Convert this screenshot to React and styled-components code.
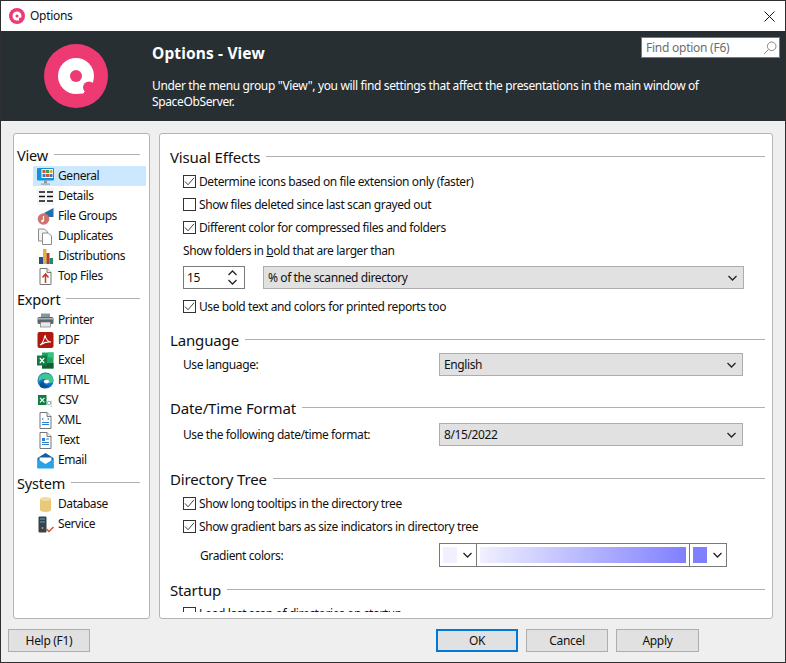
import React from 'react';
import styled, { createGlobalStyle } from 'styled-components';

const Global = createGlobalStyle`
  html, body { margin: 0; padding: 0; background: #efefef; }
  body { font-family: "Noto Sans", "Open Sans", sans-serif; font-size: 12px; color: #111; }
`;

const Window = styled.div`
  width: 786px;
  height: 663px;
  box-sizing: border-box;
  border: 1px solid #2f2f2f;
  display: flex;
  flex-direction: column;
  background: #efefef;
  overflow: hidden;
`;

const TitleBar = styled.div`
  height: 30px;
  flex: none;
  background: #fff;
  display: flex;
  align-items: center;
  padding: 0 10px 0 8px;
  gap: 5px;
  letter-spacing: -0.3px;
`;

const TitleText = styled.span`
  flex: 1;
  margin-top: -1px;
`;

const Header = styled.div`
  height: 90px;
  flex: none;
  background: #272f33;
  display: flex;
  color: #fff;
`;

const LogoWrap = styled.div`
  width: 151px;
  flex: none;
  padding: 13px 0 0 43px;
  box-sizing: border-box;
`;

const HeaderCopy = styled.div`
  flex: 1;
  display: flex;
  flex-direction: column;
  padding: 6px 5px 0 0;
`;

const HeaderTop = styled.div`
  display: flex;
  justify-content: space-between;
  height: 40px;
`;

const HeaderTitle = styled.div`
  font-size: 15.5px;
  font-weight: 700;
  letter-spacing: 0.14px;
  line-height: 20px;
  margin-top: 6px;
`;

const SearchBox = styled.div`
  width: 139px;
  height: 21px;
  box-sizing: border-box;
  background: #fff;
  border: 1px solid #7a7a7a;
  color: #6d6d6d;
  display: flex;
  align-items: center;
  justify-content: space-between;
  padding: 0 2px 0 4px;
  letter-spacing: -0.25px;
`;

const HeaderDesc = styled.div`
  width: 570px;
  line-height: 15.5px;
  letter-spacing: -0.36px;
  margin-top: 1px;
`;

const Body = styled.div`
  flex: none;
  display: flex;
  gap: 9px;
  padding: 12px 12px 0 12px;
`;

const Panel = styled.div`
  background: #fff;
  border: 1px solid #b4b4b4;
  border-radius: 3px;
  box-sizing: border-box;
  height: 486px;
  overflow: hidden;
`;

const Sidebar = styled(Panel)`
  width: 137px;
  flex: none;
  padding: 11px 3px 0 3px;
`;

const GroupHead = styled.div`
  height: 21px;
  box-sizing: border-box;
  padding-bottom: 2px;
  display: flex;
  align-items: center;
  gap: 6px;
  font-size: 14.5px;
  letter-spacing: -0.2px;
  padding-right: 6px;
  margin-top: ${p => (p.$first ? 0 : 3)}px;
  &::after {
    content: '';
    flex: 1;
    height: 1px;
    background: #b0b0b0;
  }
`;

const NavItem = styled.div`
  height: 20px;
  margin-left: 16px;
  display: flex;
  align-items: center;
  gap: 4px;
  padding-left: 4px;
  background: ${p => (p.$active ? '#cce8ff' : 'transparent')};
  letter-spacing: -0.42px;
`;

const NavLabel = styled.span`
  margin-top: -2px;
`;

const NavIcon = styled.svg`
  width: 17px;
  height: 17px;
  flex: none;
`;

const Main = styled(Panel)`
  flex: 1;
  padding: 13px 7px 0 10px;
`;

const ScrollArea = styled.div`
  height: 465px;
  overflow: hidden;
`;

const SectionHead = styled.div`
  height: 20px;
  display: flex;
  align-items: center;
  gap: 6px;
  font-size: 15px;
  letter-spacing: -0.15px;
  margin-top: ${p => p.$gap || 0}px;
  margin-bottom: ${p => p.$after || 0}px;
  &::after {
    content: '';
    flex: 1;
    height: 1px;
    background: #b0b0b0;
    margin-top: -2px;
  }
`;

const Row = styled.div`
  height: ${p => p.$h || 23}px;
  display: flex;
  align-items: center;
  padding-left: 13px;
  letter-spacing: -0.4px;
  margin-top: ${p => p.$top || 0}px;
`;

const Box = styled.span`
  width: 13px;
  height: 13px;
  box-sizing: border-box;
  border: 1px solid #333;
  background: #fff;
  margin-right: 3px;
  flex: none;
  display: flex;
  align-items: center;
  justify-content: center;
`;

const Spin = styled.div`
  width: 62px;
  height: 23px;
  box-sizing: border-box;
  border: 1px solid #7a7a7a;
  background: #fff;
  display: flex;
  align-items: center;
  justify-content: space-between;
  padding: 0 7px 0 3px;
  margin-right: 18px;
`;

const SpinArrows = styled.div`
  display: flex;
  flex-direction: column;
  gap: 3px;
`;

const Select = styled.div`
  width: ${p => p.$w}px;
  height: 23px;
  box-sizing: border-box;
  border: 1px solid #adadad;
  background: #e1e1e1;
  display: flex;
  align-items: center;
  justify-content: space-between;
  padding: 0 6px 0 4px;
`;

const RowLabel = styled.span`
  width: 256px;
  flex: none;
  box-sizing: border-box;
  padding-left: ${p => p.$indent || 0}px;
`;

const GradientCtl = styled.div`
  width: 288px;
  height: 24px;
  box-sizing: border-box;
  border: 1px solid #7a7a7a;
  background: #fff;
  display: flex;
`;

const PickerCell = styled.div`
  width: 36px;
  flex: none;
  display: flex;
  align-items: center;
  justify-content: space-between;
  padding: 0 4px 0 3px;
  box-sizing: border-box;
`;

const Swatch = styled.div`
  width: 14px;
  height: 16px;
  background: ${p => p.$c};
`;

const GradientCell = styled.div`
  flex: 1;
  border-left: 1px solid #7a7a7a;
  border-right: 1px solid #7a7a7a;
  padding: 3px;
  display: flex;
`;

const GradientBar = styled.div`
  flex: 1;
  background: linear-gradient(to right, #f0f0ff, #8080ff);
`;

const Footer = styled.div`
  flex: 1;
  display: flex;
  align-items: flex-start;
  padding: 10px 0 0 7px;
`;

const Button = styled.div`
  width: ${p => p.$w || 82}px;
  height: 23px;
  box-sizing: border-box;
  border: ${p => (p.$primary ? '2px solid #0078d7' : '1px solid #adadad')};
  background: #e1e1e1;
  display: flex;
  align-items: center;
  justify-content: center;
  margin-left: ${p => p.$left || 0}px;
  letter-spacing: -0.3px;
`;

const Logo = ({ size }) => (
  <svg width={size} height={size} viewBox="0 0 64 64">
    <circle cx="32" cy="32" r="32" fill="#ee3a72" />
    <circle cx="32" cy="32" r="18" fill="#fff" />
    <circle cx="32" cy="32" r="6" fill="#ee3a72" />
    <circle cx="45" cy="43.5" r="6" fill="#ee3a72" />
    <circle cx="38" cy="47.5" r="2.2" fill="#fff" />
  </svg>
);

const Chevron = ({ up }) => (
  <svg width="9" height="6" viewBox="0 0 9 6">
    <path d={up ? 'M0.5 5L4.5 1L8.5 5' : 'M0.5 1L4.5 5L8.5 1'} fill="none" stroke="#222" strokeWidth="1.3" />
  </svg>
);

const Check = () => (
  <svg width="11" height="11" viewBox="0 0 11 11">
    <path d="M1 5.5L4 8.8L10 1.8" fill="none" stroke="#444" strokeWidth="1" />
  </svg>
);

const CheckRow = ({ checked, children, top }) => (
  <Row $top={top}>
    <Box>{checked && <Check />}</Box>
    <span>{children}</span>
  </Row>
);

const Doc = ({ children, stroke = '#777' }) => (
  <>
    <path d="M3 .5h7l4 4v12H3z" fill="#fff" stroke={stroke} />
    <path d="M10 .5v4h4" fill="#eee" stroke={stroke} />
    {children}
  </>
);

const icons = {
  General: (
    <>
      <rect x="0" y="0" width="17" height="12.5" fill="#1593d6" rx="1" />
      <rect x="4.5" y="1" width="11.5" height="9" fill="#fff" />
      <rect x="5.5" y="2" width="3" height="3" fill="#e24c3a" />
      <rect x="9" y="2" width="3" height="3" fill="#3fa04a" />
      <rect x="12.5" y="2" width="3" height="3" fill="#e8a52a" />
      <rect x="5.5" y="6" width="3" height="3" fill="#2d7fd3" />
      <rect x="9" y="6" width="3" height="3" fill="#d8562e" />
      <rect x="12.5" y="6" width="3" height="3" fill="#3b6fc4" />
      <rect x="7" y="12.5" width="3" height="3" fill="#8a97a0" />
      <rect x="4" y="15.5" width="9" height="1.2" fill="#9aa5ad" />
    </>
  ),
  Details: (
    <>
      <rect x="0" y="0" width="17" height="17" fill="#f6f6f6" />
      <path d="M2 4h6M2 8.5h6M2 13h6M10 4h6M10 8.5h6M10 13h6" stroke="#111" strokeWidth="1.3" fill="none" />
    </>
  ),
  'File Groups': (
    <>
      <path d="M7 5L16.5 0v9H10z" fill="#1f6fb5" />
      <circle cx="6.5" cy="11" r="5.8" fill="#d0736e" />
      <path d="M6.5 8v5" stroke="#fff" strokeWidth="1.2" />
      <circle cx="5.4" cy="13" r="1.2" fill="#fff" />
    </>
  ),
  Duplicates: (
    <>
      <path d="M1.5 1h6l3 3v9h-9z" fill="#f3f3f3" stroke="#8c8c8c" />
      <path d="M5.5 5h6l3 3v8.5h-9z" fill="#fff" stroke="#8c8c8c" />
    </>
  ),
  Distributions: (
    <>
      <rect x="2" y="9" width="4" height="7" fill="#2b4c8c" />
      <rect x="6" y="1" width="3.5" height="15" fill="#e0b23a" />
      <rect x="9.5" y="5" width="3" height="11" fill="#b23a2e" />
      <rect x="12.5" y="10" width="3.5" height="6" fill="#1f8a70" />
    </>
  ),
  'Top Files': (
    <Doc>
      <path d="M8.5 15V7M5.5 9.5l3-3.5 3 3.5" fill="none" stroke="#c8392b" strokeWidth="1.5" />
    </Doc>
  ),
  Printer: (
    <>
      <rect x="4" y="1.5" width="9" height="4" fill="#8a9499" />
      <rect x="6" y="2.5" width="5" height="1" fill="#35c48d" />
      <rect x=".5" y="5" width="16" height="7" rx="1.5" fill="#5d686e" />
      <rect x="1" y="6" width="15" height="1.5" fill="#a9b2b6" />
      <rect x="3.5" y="10" width="10" height="5" fill="#e8e8e8" stroke="#6a6a6a" strokeWidth=".6" />
    </>
  ),
  PDF: (
    <>
      <rect x=".5" y="0" width="16" height="16" rx="2" fill="#b0170f" />
      <path d="M3 13c2-1 4-5 5-10 .6 4 2.5 6.5 6 7-3-.4-7 .4-11 3z" fill="none" stroke="#fff" strokeWidth="1.1" />
    </>
  ),
  Excel: (
    <>
      <rect x="5" y="0.5" width="11.5" height="16" fill="#21a366" />
      <rect x="11" y="0.5" width="5.5" height="5" fill="#33c481" />
      <rect x="5" y="11" width="11.5" height="5.5" fill="#185c37" />
      <rect x="0" y="3.5" width="10" height="10" fill="#107c41" />
      <path d="M2.8 6l4.4 5M7.2 6l-4.4 5" stroke="#fff" strokeWidth="1.3" fill="none" />
    </>
  ),
  HTML: (
    <>
      <circle cx="8.5" cy="8.5" r="8" fill="#1273c4" />
      <path d="M1.5 6C4.5 0 14 0 16.5 7c.5 3-2 5-5 4 1-2-.5-4-3-4C5.5 7 3.5 7.5 1.5 10z" fill="#3ec78e" />
      <path d="M6 9.5c0 3 3.5 5 7 3.5-2 3-6 4-9 2.5C2 13.5 3 9.5 6 9.5z" fill="#0f4f98" />
      <ellipse cx="9.5" cy="9.5" rx="2.6" ry="2" fill="#fff" />
    </>
  ),
  CSV: (
    <>
      <rect x="1" y="3" width="8.5" height="10" fill="#107c41" />
      <path d="M3 5.8l4.4 4.6M7.4 5.8L3 10.4" stroke="#fff" strokeWidth="1.2" fill="none" />
      <circle cx="12" cy="11" r="1.8" fill="none" stroke="#86b8a2" />
      <path d="M14 9v3.5M14.8 13.5l-.8 1.5" stroke="#86b8a2" fill="none" />
    </>
  ),
  XML: (
    <Doc>
      <path d="M6.5 6L5 7l1.5 1M10.5 6L12 7l-1.5 1" fill="none" stroke="#2f7fd1" strokeWidth=".8" />
      <path d="M5 10.5h7M5 12.5h7" stroke="#2f7fd1" strokeWidth="1" />
    </Doc>
  ),
  Text: (
    <Doc>
      <rect x="5" y="6" width="3" height="3" fill="#2f7fd1" />
      <path d="M9 7h3M5 10.5h7M5 12.5h7" stroke="#2f7fd1" strokeWidth="1" />
    </Doc>
  ),
  Email: (
    <>
      <path d="M.5 6L8.5 1l8 5v10h-16z" fill="#0d5fa8" />
      <path d="M2.5 5.5h12v5l-6 3-6-3z" fill="#fff" />
      <path d="M.5 7l8 5 8-5v9.5h-16z" fill="#2aa3e6" />
    </>
  ),
  Database: (
    <>
      <path d="M3 3v11c0 2.5 11 2.5 11 0V3z" fill="#e8c979" />
      <ellipse cx="8.5" cy="3" rx="5.5" ry="2" fill="#f2dc9f" />
    </>
  ),
  Service: (
    <>
      <rect x="1.5" y="0.5" width="8" height="16" rx="1" fill="#3a4248" />
      <path d="M3 3h5M3 6h5" stroke="#4aa3df" strokeWidth="1.2" />
      <circle cx="5.5" cy="12" r="1" fill="#9aa5ad" />
      <path d="M9.5 13l2.5 2.5 4.5-4.5" fill="none" stroke="#d9541e" strokeWidth="1.5" />
    </>
  ),
};

const nav = [
  ['View', ['General', 'Details', 'File Groups', 'Duplicates', 'Distributions', 'Top Files']],
  ['Export', ['Printer', 'PDF', 'Excel', 'HTML', 'CSV', 'XML', 'Text', 'Email']],
  ['System', ['Database', 'Service']],
];

export default function App() {
  return (
    <Window>
      <Global />
      <TitleBar>
        <Logo size={16} />
        <TitleText>Options</TitleText>
        <svg width="11" height="11" viewBox="0 0 11 11">
          <path d="M.5.5l10 10M10.5.5l-10 10" stroke="#111" strokeWidth="1" fill="none" />
        </svg>
      </TitleBar>
      <Header>
        <LogoWrap>
          <Logo size={64} />
        </LogoWrap>
        <HeaderCopy>
          <HeaderTop>
            <HeaderTitle>Options - View</HeaderTitle>
            <SearchBox>
              <span>Find option (F6)</span>
              <svg width="14" height="14" viewBox="0 0 14 14">
                <circle cx="8.7" cy="5.3" r="4.3" fill="none" stroke="#8a8a8a" />
                <path d="M5.5 8.5L1 13" stroke="#8a8a8a" fill="none" />
              </svg>
            </SearchBox>
          </HeaderTop>
          <HeaderDesc>
            Under the menu group "View", you will find settings that affect the presentations in the main window of SpaceObServer.
          </HeaderDesc>
        </HeaderCopy>
      </Header>
      <Body>
        <Sidebar>
          {nav.map(([group, items], i) => (
            <div key={group}>
              <GroupHead $first={i === 0}>{group}</GroupHead>
              {items.map(item => (
                <NavItem key={item} $active={item === 'General'}>
                  <NavIcon viewBox="0 0 17 17">{icons[item]}</NavIcon>
                  <NavLabel>{item}</NavLabel>
                </NavItem>
              ))}
            </div>
          ))}
        </Sidebar>
        <Main>
          <ScrollArea>
            <SectionHead $after={3}>Visual Effects</SectionHead>
            <CheckRow checked>Determine icons based on file extension only (faster)</CheckRow>
            <CheckRow>Show files deleted since last scan grayed out</CheckRow>
            <CheckRow checked>Different color for compressed files and folders</CheckRow>
            <Row $h={22}>
              <span>Show folders in <u>b</u>old that are larger than</span>
            </Row>
            <Row $top={5}>
              <Spin>
                <span>15</span>
                <SpinArrows>
                  <Chevron up />
                  <Chevron />
                </SpinArrows>
              </Spin>
              <Select $w={481}>
                <span>% of the scanned directory</span>
                <Chevron />
              </Select>
            </Row>
            <CheckRow checked top={6}>Use bold text and colors for printed reports too</CheckRow>

            <SectionHead $gap={12} $after={3}>Language</SectionHead>
            <Row>
              <RowLabel>Use language:</RowLabel>
              <Select $w={304}>
                <span>English</span>
                <Chevron />
              </Select>
            </Row>

            <SectionHead $gap={22} $after={5}>Date/Time Format</SectionHead>
            <Row>
              <RowLabel>Use the following date/time format:</RowLabel>
              <Select $w={304}>
                <span>8/15/2022</span>
                <Chevron />
              </Select>
            </Row>

            <SectionHead $gap={23} $after={3}>Directory Tree</SectionHead>
            <CheckRow checked>Show long tooltips in the directory tree</CheckRow>
            <CheckRow checked>Show gradient bars as size indicators in directory tree</CheckRow>
            <Row $h={24} $top={5}>
              <RowLabel $indent={17}>Gradient colors:</RowLabel>
              <GradientCtl>
                <PickerCell>
                  <Swatch $c="#f0f0ff" />
                  <Chevron />
                </PickerCell>
                <GradientCell>
                  <GradientBar />
                </GradientCell>
                <PickerCell>
                  <Swatch $c="#8080ff" />
                  <Chevron />
                </PickerCell>
              </GradientCtl>
            </Row>

            <SectionHead $gap={13} $after={2}>Startup</SectionHead>
            <CheckRow>Load last scan of directories on startup</CheckRow>
          </ScrollArea>
        </Main>
      </Body>
      <Footer>
        <Button $w={82}>Help (F1)</Button>
        <Button $left={346} $primary>OK</Button>
        <Button $left={8}>Cancel</Button>
        <Button $left={8} $w={83}>Apply</Button>
      </Footer>
    </Window>
  );
}
